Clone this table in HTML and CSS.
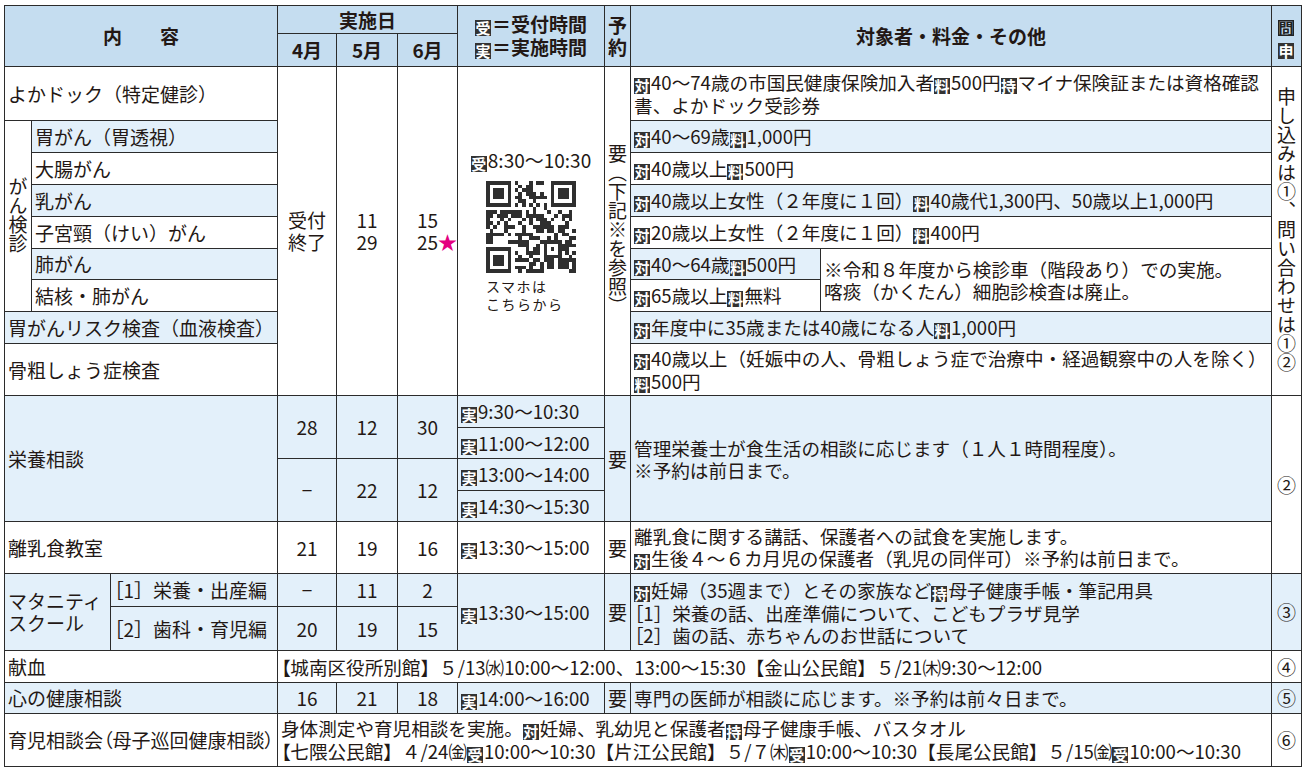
FILE: index.html
```html
<!DOCTYPE html>
<html lang="ja">
<head>
<meta charset="utf-8">
<title>健診・相談 日程表</title>
<link rel="stylesheet" href="styles.css">
</head>
<body>
<div class="page">
<table class="sched">
<colgroup>
<col class="c-a"><col class="c-b"><col class="c-c"><col class="c-m4"><col class="c-m5"><col class="c-m6"><col class="c-t"><col class="c-y"><col class="c-n1"><col class="c-n2"><col class="c-q">
</colgroup>
<thead>
<tr class="h-28">
<th colspan="3" rowspan="2">内　　容</th>
<th colspan="3">実施日</th>
<th rowspan="2"><span class="bx">受</span>＝受付時間<br><span class="bx">実</span>＝実施時間</th>
<th rowspan="2" class="pad0">予<br>約</th>
<th colspan="2" rowspan="2">対象者・料金・その他</th>
<th rowspan="2" class="pad0"><span class="bx bx-o">問</span><br><span class="bx">申</span></th>
</tr>
<tr class="h-33"><th>4月</th><th>5月</th><th>6月</th></tr>
</thead>
<tbody>
<tr class="h-54">
<td colspan="3" class="lbl">よかドック（特定健診）</td>
<td rowspan="9" class="ctr">受付<br>終了</td>
<td rowspan="9" class="ctr">11<br>29</td>
<td rowspan="9" class="ctr">15<br>25<span class="star">★</span></td>
<td rowspan="9" class="pad0">
<div class="qr-wrap">
<div class="qr-time"><span class="bx">受</span>8:30～10:30</div>
<div class="qr-block">
<svg class="qr" viewBox="0 0 25 25" preserveAspectRatio="none" shape-rendering="crispEdges"><path id="qr-path" fill="#2f2f2f" fill-rule="evenodd" d=""/></svg>
<div class="qr-cap">スマホは<br>こちらから</div>
</div>
</div>
</td>
<td rowspan="9" class="ctr pad0"><span class="vt">要（下記※を参照）</span></td>
<td colspan="2" class="txt"><span class="bx">対</span>40～74歳の市国民健康保険加入者<span class="bx">料</span>500円<span class="bx">持</span>マイナ保険証または資格確認<br>書、よかドック受診券</td>
<td rowspan="9" class="ctr pad0"><span class="vt">申し込みは①、問い合わせは①②</span></td>
</tr>
<tr class="h-32">
<td rowspan="6" class="ctr pad0"><span class="vt">がん検診</span></td>
<td colspan="2" class="lbl bl">胃がん（胃透視）</td>
<td colspan="2" class="txt bl"><span class="bx">対</span>40～69歳<span class="bx">料</span>1,000円</td>
</tr>
<tr class="h-32">
<td colspan="2" class="lbl">大腸がん</td>
<td colspan="2" class="txt"><span class="bx">対</span>40歳以上<span class="bx">料</span>500円</td>
</tr>
<tr class="h-32">
<td colspan="2" class="lbl bl">乳がん</td>
<td colspan="2" class="txt bl"><span class="bx">対</span>40歳以上女性（２年度に１回）<span class="bx">料</span>40歳代1,300円、50歳以上1,000円</td>
</tr>
<tr class="h-32">
<td colspan="2" class="lbl">子宮頸（けい）がん</td>
<td colspan="2" class="txt"><span class="bx">対</span>20歳以上女性（２年度に１回）<span class="bx">料</span>400円</td>
</tr>
<tr class="h-31">
<td colspan="2" class="lbl bl">肺がん</td>
<td class="txt bl"><span class="bx">対</span>40～64歳<span class="bx">料</span>500円</td>
<td rowspan="2" class="txt">※令和８年度から検診車（階段あり）での実施。<br>喀痰（かくたん）細胞診検査は廃止。</td>
</tr>
<tr class="h-32">
<td colspan="2" class="lbl">結核・肺がん</td>
<td class="txt"><span class="bx">対</span>65歳以上<span class="bx">料</span>無料</td>
</tr>
<tr class="h-32">
<td colspan="3" class="lbl bl">胃がんリスク検査（血液検査）</td>
<td colspan="2" class="txt bl"><span class="bx">対</span>年度中に35歳または40歳になる人<span class="bx">料</span>1,000円</td>
</tr>
<tr class="h-52">
<td colspan="3" class="lbl">骨粗しょう症検査</td>
<td colspan="2" class="txt"><span class="bx">対</span>40歳以上（妊娠中の人、骨粗しょう症で治療中・経過観察中の人を除く）<br><span class="bx">料</span>500円</td>
</tr>
<tr class="h-32">
<td colspan="3" rowspan="4" class="lbl bl">栄養相談</td>
<td rowspan="2" class="ctr bl">28</td>
<td rowspan="2" class="ctr bl">12</td>
<td rowspan="2" class="ctr bl">30</td>
<td class="txt bl"><span class="bx">実</span>9:30～10:30</td>
<td rowspan="4" class="ctr pad0 bl">要</td>
<td colspan="2" rowspan="4" class="txt bl">管理栄養士が食生活の相談に応じます（１人１時間程度）。<br>※予約は前日まで。</td>
<td rowspan="5" class="ctr pad0">②</td>
</tr>
<tr class="h-31"><td class="txt bl"><span class="bx">実</span>11:00～12:00</td></tr>
<tr class="h-32">
<td rowspan="2" class="ctr bl">−</td>
<td rowspan="2" class="ctr bl">22</td>
<td rowspan="2" class="ctr bl">12</td>
<td class="txt bl"><span class="bx">実</span>13:00～14:00</td>
</tr>
<tr class="h-31"><td class="txt bl"><span class="bx">実</span>14:30～15:30</td></tr>
<tr class="h-52">
<td colspan="3" class="lbl">離乳食教室</td>
<td class="ctr">21</td>
<td class="ctr">19</td>
<td class="ctr">16</td>
<td class="txt"><span class="bx">実</span>13:30～15:00</td>
<td class="ctr pad0">要</td>
<td colspan="2" class="txt">離乳食に関する講話、保護者への試食を実施します。<br><span class="bx">対</span>生後４～６カ月児の保護者（乳児の同伴可）※予約は前日まで。</td>
</tr>
<tr class="h-33">
<td colspan="2" rowspan="2" class="lbl bl">マタニティ<br>スクール</td>
<td class="lbl bl"><span class="palt">［</span>1］栄養・出産編</td>
<td class="ctr bl">−</td>
<td class="ctr bl">11</td>
<td class="ctr bl">2</td>
<td rowspan="2" class="txt bl"><span class="bx">実</span>13:30～15:00</td>
<td rowspan="2" class="ctr pad0 bl">要</td>
<td colspan="2" rowspan="2" class="txt bl"><span class="bx">対</span>妊婦（35週まで）とその家族など<span class="bx">持</span>母子健康手帳・筆記用具<br><span class="palt">［</span>1］栄養の話、出産準備について、こどもプラザ見学<br><span class="palt">［</span>2］歯の話、赤ちゃんのお世話について</td>
<td rowspan="2" class="ctr pad0 bl">③</td>
</tr>
<tr class="h-44">
<td class="lbl bl"><span class="palt">［</span>2］歯科・育児編</td>
<td class="ctr bl">20</td>
<td class="ctr bl">19</td>
<td class="ctr bl">15</td>
</tr>
<tr class="h-32">
<td colspan="3" class="lbl">献血</td>
<td colspan="7" class="txt tight"><span class="palt">【</span>城南区役所別館】５/13㈬10:00～12:00、13:00～15:30【金山公民館】５/21㈭9:30～12:00</td>
<td class="ctr pad0">④</td>
</tr>
<tr class="h-31">
<td colspan="3" class="lbl bl">心の健康相談</td>
<td class="ctr bl">16</td>
<td class="ctr bl">21</td>
<td class="ctr bl">18</td>
<td class="txt bl"><span class="bx">実</span>14:00～16:00</td>
<td class="ctr pad0 bl">要</td>
<td colspan="2" class="txt bl">専門の医師が相談に応じます。※予約は前々日まで。</td>
<td class="ctr pad0 bl">⑤</td>
</tr>
<tr class="h-53">
<td colspan="3" class="lbl palt">育児相談会（母子巡回健康相談）</td>
<td colspan="7" class="txt tight">身体測定や育児相談を実施。<span class="bx">対</span>妊婦、乳幼児と保護者<span class="bx">持</span>母子健康手帳、バスタオル<br><span class="palt">【</span>七隈公民館】４/24㈮<span class="bx">受</span>10:00～10:30【片江公民館】５/７㈭<span class="bx">受</span>10:00～10:30【長尾公民館】５/15㈮<span class="bx">受</span>10:00～10:30</td>
<td class="ctr pad0">⑥</td>
</tr>
</tbody>
</table>
</div>
<script src="script.js"></script>
</body>
</html>
```

FILE: styles.css
```css
html, body {
  margin: 0;
  padding: 0;
  background: #ffffff;
}
body {
  font-family: "Liberation Sans Narrow", "Noto Sans CJK JP", "Noto Sans", sans-serif;
  color: #231815;
  font-size: 19px;
}
.page {
  padding: 5px 2px 0 4px;
}
.sched {
  border-collapse: collapse;
  table-layout: fixed;
  width: 1297px;
}
.sched th,
.sched td {
  border: 1px solid #2b2b2b;
  padding: 0 3px;
  line-height: 22px;
  vertical-align: middle;
  white-space: nowrap;
}
.sched th {
  background: #c5ddf0;
  font-weight: 700;
  text-align: center;
}
.c-a { width: 27px; }
.c-b { width: 79px; }
.c-c { width: 167px; }
.c-m4 { width: 59px; }
.c-m5 { width: 61px; }
.c-m6 { width: 60px; }
.c-t { width: 147px; }
.c-y { width: 26px; }
.c-n1 { width: 190px; }
.c-n2 { width: 451px; }
.c-q { width: 30px; }

.h-28 { height: 28px; }
.h-31 { height: 31px; }
.h-32 { height: 32px; }
.h-33 { height: 33px; }
.h-44 { height: 44px; }
.h-52 { height: 52px; }
.h-53 { height: 53px; }
.h-54 { height: 54px; }

.bl { background: #e3f0fa; }
.lbl { text-align: left; padding-left: 3px; }
.ctr { text-align: center; padding: 0; }
.pad0 { padding: 0; }
.txt { text-align: left; padding-left: 2px; font-size: 18.6px; }
.tight { padding-left: 1px; }
.palt { font-feature-settings: "palt"; }

.bx {
  display: inline-block;
  width: 16px;
  height: 16px;
  line-height: 16px;
  font-size: 15px;
  font-weight: 700;
  background: #333333;
  color: #ffffff;
  text-align: center;
  vertical-align: -2px;
  margin-right: 1px;
  font-family: "Noto Sans CJK JP", sans-serif;
}
.bx-o {
  background: transparent;
  color: #222222;
  box-shadow: inset 0 0 0 1.5px #222222;
}
.vt {
  display: inline-block;
  writing-mode: vertical-rl;
  line-height: 1;
  font-family: "Noto Sans CJK JP", sans-serif;
  font-size: 19px;
}
.star {
  color: #e4007f;
  margin-right: -19px;
}
.qr-wrap {
  display: flex;
  flex-direction: column;
  align-items: center;
}
.qr-time {
  margin-bottom: 9px;
}
.qr-block {
  display: flex;
  flex-direction: column;
}
.qr {
  display: block;
  width: 90px;
  height: 92px;
}
.qr-cap {
  margin-top: 4px;
  font-family: "Noto Sans CJK JP", sans-serif;
  font-size: 14px;
  letter-spacing: 1.5px;
  line-height: 18px;
}
```

FILE: script.js
```js
(function () {
  var path = document.getElementById('qr-path');
  if (!path) return;
  var n = 25, seed = 20250401, d = '';
  function rnd() { seed = (seed * 1664525 + 1013904223) >>> 0; return seed / 4294967296; }
  function reserved(x, y) {
    if (x < 8 && y < 8) return true;
    if (x >= n - 8 && y < 8) return true;
    if (x < 8 && y >= n - 8) return true;
    if (x >= 16 && x <= 20 && y >= 16 && y <= 20) return true;
    return false;
  }
  function sq(x, y, w) { d += 'M' + x + ' ' + y + 'h' + w + 'v' + w + 'h-' + w + 'z'; }
  [[0, 0], [n - 7, 0], [0, n - 7]].forEach(function (p) {
    sq(p[0], p[1], 7); sq(p[0] + 1, p[1] + 1, 5); sq(p[0] + 2, p[1] + 2, 3);
  });
  sq(16, 16, 5); sq(17, 17, 3); sq(18, 18, 1);
  for (var y = 0; y < n; y++) {
    for (var x = 0; x < n; x++) {
      if (reserved(x, y)) continue;
      var on;
      if (y === 6) on = x % 2 === 0;
      else if (x === 6) on = y % 2 === 0;
      else on = rnd() < 0.5;
      if (on) sq(x, y, 1);
    }
  }
  path.setAttribute('d', d);
})();
```
